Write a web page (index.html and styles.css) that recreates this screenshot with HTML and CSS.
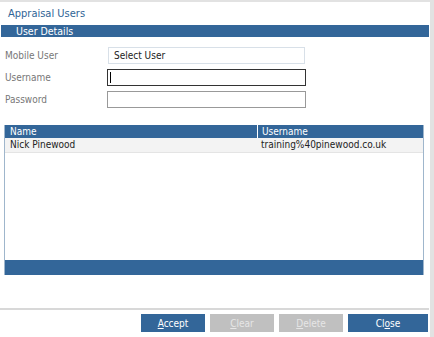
FILE: index.html
```html
<!DOCTYPE html>
<html>
<head>
<meta charset="utf-8">
<link rel="stylesheet" href="styles.css">
</head>
<body>
<div class="frame">
  <div class="title">Appraisal Users</div>
  <div class="section-bar">User Details</div>
  <div class="form">
    <div class="form-row">
      <span class="label">Mobile User</span>
      <div class="select">Select User</div>
    </div>
    <div class="form-row">
      <span class="label">Username</span>
      <div class="input active"><span class="caret"></span></div>
    </div>
    <div class="form-row">
      <span class="label">Password</span>
      <div class="input"></div>
    </div>
  </div>
  <div class="grid">
    <div class="grid-head">
      <div class="col-name">Name</div>
      <div class="col-user">Username</div>
    </div>
    <div class="grid-row">
      <div class="col-name">Nick Pinewood</div>
      <div class="col-user">training%40pinewood.co.uk</div>
    </div>
    <div class="grid-body"></div>
    <div class="grid-foot"></div>
  </div>
  <div class="spacer"></div>
  <div class="buttons">
    <button class="btn primary btn-accept"><u>A</u>ccept</button>
    <button class="btn disabled"><u>C</u>lear</button>
    <button class="btn disabled"><u>D</u>elete</button>
    <button class="btn primary btn-close">Cl<u>o</u>se</button>
  </div>
</div>
</body>
</html>
```
FILE: styles.css
```css
html, body {
  margin: 0;
  padding: 0;
  background: #ffffff;
}
body {
  font-family: "DejaVu Sans Condensed", "DejaVu Sans", sans-serif;
  font-size: 10px;
  color: #333;
}
.frame {
  width: 434px;
  height: 337px;
  box-sizing: border-box;
  border-top: 2px solid #e2e2e2;
  border-right: 4px solid #e2e2e2;
  display: flex;
  flex-direction: column;
}
.title {
  height: 23px;
  line-height: 24px;
  padding-left: 8px;
  color: #2f6496;
  font-size: 11px;
}
.section-bar {
  margin: 0 1px 0 1px;
  height: 12px;
  line-height: 12px;
  background: #336699;
  color: #fff;
  padding-left: 15px;
  font-size: 10.5px;
}
.form {
  padding-top: 10px;
  display: flex;
  flex-direction: column;
  gap: 5px;
}
.form-row {
  display: flex;
  align-items: center;
  height: 17px;
}
.label {
  width: 102px;
  padding-left: 5px;
  color: #777;
}
.select {
  margin-left: 1px;
  width: 197px;
  height: 17px;
  box-sizing: border-box;
  border: 1px solid #d8e0e8;
  padding-left: 5px;
  line-height: 15px;
  color: #222;
}
.input {
  width: 199px;
  height: 17px;
  box-sizing: border-box;
  border: 1px solid #999;
  position: relative;
}
.input.active {
  border-color: #333;
}
.caret {
  position: absolute;
  left: 2px;
  top: 2px;
  width: 1px;
  height: 11px;
  background: #000;
}
.grid {
  margin: 17px 6px 0 4px;
  border-left: 1px solid #9fb6cc;
  border-right: 1px solid #9fb6cc;
  display: flex;
  flex-direction: column;
}
.grid-head {
  display: flex;
  height: 13px;
  line-height: 13px;
  background: #336699;
  color: #fff;
}
.grid-head .col-name {
  border-right: 1px solid #fff;
}
.col-name {
  width: 247px;
  padding-left: 5px;
}
.col-user {
  padding-left: 4px;
}
.grid-row {
  display: flex;
  height: 14px;
  line-height: 14px;
  background: #f3f3f3;
  border-bottom: 1px solid #e4e4e4;
  color: #222;
}
.grid-body {
  height: 107px;
  background: #fff;
}
.grid-foot {
  height: 15px;
  background: #336699;
}
.spacer {
  height: 33px;
  border-bottom: 2px solid #d8d8d8;
  margin-right: 1px;
}
.buttons {
  display: flex;
  justify-content: flex-end;
  gap: 5px;
  padding-top: 4px;
  padding-right: 2px;
}
.btn {
  height: 18px;
  width: 64px;
  border: none;
  padding: 0;
  font-family: "DejaVu Sans Condensed", "DejaVu Sans", sans-serif;
  font-size: 10px;
  color: #fff;
}
.btn.primary {
  background: #336699;
}
.btn.disabled {
  background: #c0c0c0;
  color: #e6e6e6;
}
.btn-close {
  width: 80px;
}
```
